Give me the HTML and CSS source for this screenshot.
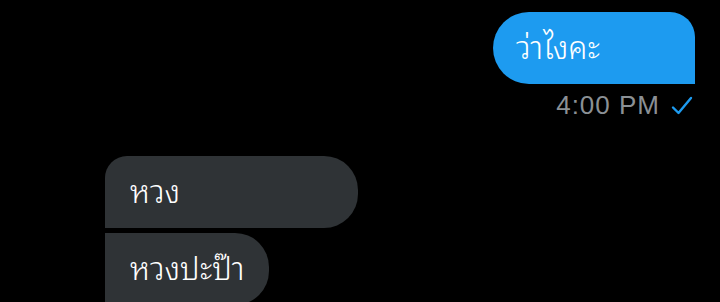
FILE: index.html
```html
<!DOCTYPE html>
<html lang="th">
<head>
<meta charset="utf-8">
<link rel="stylesheet" href="styles.css">
</head>
<body>
<div class="chat">
  <div class="out">
    <div class="bubble bubble-out">ว่าไงคะ</div>
    <div class="meta">
      <span class="time">4:00 PM</span>
      <svg class="check" width="22" height="20" viewBox="0 0 22 20"><path d="M2 11.5 L7.5 17 L20 2" fill="none" stroke="#1d9bf0" stroke-width="2.4" stroke-linecap="round" stroke-linejoin="round"/></svg>
    </div>
  </div>
  <div class="in">
    <div class="bubble bubble-in first">หวง</div>
    <div class="bubble bubble-in last">หวงปะป๊า</div>
  </div>
</div>
</body>
</html>
```
FILE: styles.css
```css
html, body {
  margin: 0;
  padding: 0;
  background: #000;
  width: 720px;
  height: 302px;
  overflow: hidden;
}
.chat {
  font-family: "Noto Sans Thai Looped", "Noto Serif Thai", "Garuda", "Loma", "Noto Sans Thai", sans-serif;
  font-weight: 350;
  color: #fff;
}
.out {
  display: flex;
  flex-direction: column;
  align-items: flex-end;
  padding-top: 12px;
  padding-right: 25px;
}
.bubble {
  box-sizing: border-box;
  height: 72px;
  display: flex;
  align-items: center;
  font-size: 31px;
  line-height: 1;
  white-space: nowrap;
  padding: 0 23px 6px;
}
.bubble-out {
  background: #1d9bf0;
  width: 202px;
  border-radius: 36px 25px 0 36px;
}
.meta {
  display: flex;
  align-items: center;
  gap: 11px;
  height: 42px;
  margin-right: 2px;
}
.time {
  font-family: "Liberation Sans", Arial, sans-serif;
  font-weight: 400;
  font-size: 26px;
  letter-spacing: 1px;
  color: #8b9095;
}
.check { margin-top: 2px; }
.in {
  display: flex;
  flex-direction: column;
  align-items: flex-start;
  padding-left: 105px;
  margin-top: 30px;
  gap: 5px;
}
.bubble-in {
  background: #2f3336;
  padding-left: 25px;
}
.first {
  width: 253px;
  border-radius: 22px 34px 34px 0;
}
.last {
  width: 164px;
  border-radius: 0 34px 34px 0;
}
```
